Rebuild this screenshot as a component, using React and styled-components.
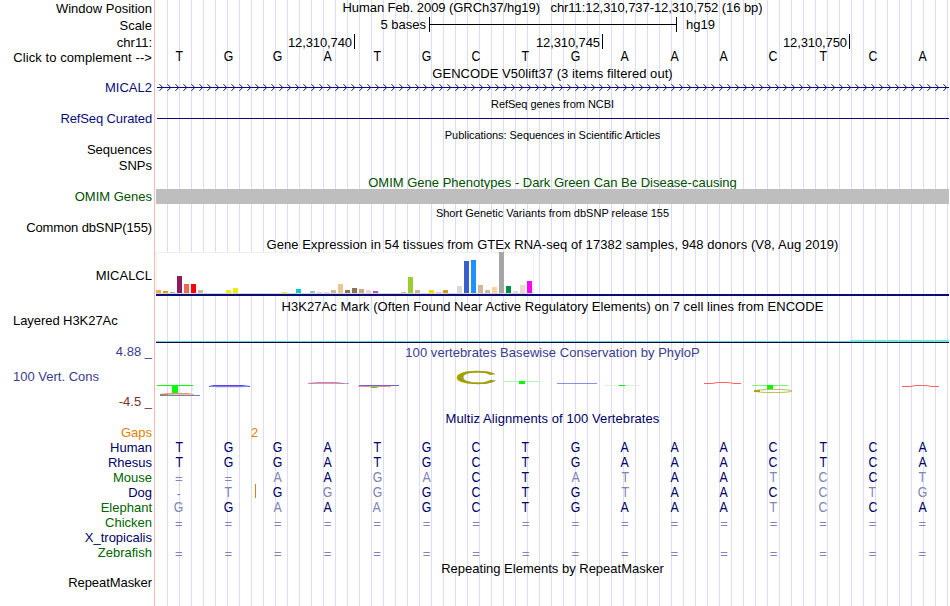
import React from "react";
import styled, { createGlobalStyle } from "styled-components";

const NAVY = "#0c0c78";
const ALIGN = "#000064";
const MISMATCH = "#8282b4";
const GREEN = "#006400";
const ORANGE = "#e08200";

const REFERENCE = "TGGATGCTGAAACTCA";

const species = [
  { name: "Human", color: ALIGN, seq: "TGGATGCTGAAACTCA" },
  { name: "Rhesus", color: ALIGN, seq: "TGGATGCTGAAACTCA" },
  { name: "Mouse", color: GREEN, seq: "==AAGACTATAATCCT" },
  { name: "Dog", color: ALIGN, seq: "-TGGGGCTGTAACCTG", insertAfter: 1 },
  { name: "Elephant", color: GREEN, seq: "GGAAAGCTGAAATCCA" },
  { name: "Chicken", color: GREEN, seq: "================" },
  { name: "X_tropicalis", color: ALIGN, seq: "" },
  { name: "Zebrafish", color: GREEN, seq: "================" },
];

// [tissue index, bar height, color]
const tissues = [
  [0, 3, "#ffa54f"],
  [1, 2, "#ee9a00"],
  [2, 1, "#8fbc8f"],
  [3, 17, "#8b1c62"],
  [4, 9, "#ee6a50"],
  [5, 9, "#ff0000"],
  [6, 3, "#cdb79e"],
  [10, 3, "#eeee00"],
  [11, 5, "#eeee00"],
  [18, 1, "#eeee00"],
  [20, 4, "#00cdcd"],
  [22, 2, "#9ac0cd"],
  [23, 1, "#eed5d2"],
  [24, 1, "#eed5d2"],
  [25, 3, "#cdb79e"],
  [26, 9, "#eec591"],
  [27, 3, "#8b7355"],
  [28, 5, "#8b7355"],
  [29, 4, "#cdaa7d"],
  [30, 3, "#eed5d2"],
  [31, 2, "#b452cd"],
  [35, 1, "#cdb79e"],
  [36, 16, "#9acd32"],
  [37, 3, "#cdb79e"],
  [39, 3, "#ffd700"],
  [40, 1, "#ffb6c1"],
  [41, 3, "#cd9b1d"],
  [43, 7, "#d9d9d9"],
  [44, 32, "#3a5fcd"],
  [45, 33, "#1e90ff"],
  [46, 8, "#cdb79e"],
  [47, 3, "#cdb79e"],
  [48, 6, "#ffd39b"],
  [49, 41, "#a6a6a6"],
  [50, 7, "#008b45"],
  [51, 2, "#eed5d2"],
  [52, 8, "#eed5d2"],
  [53, 12, "#ff00ff"],
];

const Bases = ({ seq, color, insertAfter }) => (
  <BaseRow>
    {seq.split("").map((base, i) => {
      const shade = color || (base === REFERENCE[i] ? ALIGN : MISMATCH);
      return (
        <BaseCell key={i} $color={shade}>
          {base === "=" || base === "-" ? (
            <GapSign>{base}</GapSign>
          ) : (
            <Letter>{base}</Letter>
          )}
          {insertAfter === i && <Insert />}
        </BaseCell>
      );
    })}
  </BaseRow>
);

const TitleRow = ({ height, top, color, small, spacing, children }) => (
  <Row $height={height}>
    <Label />
    <Title $top={top} $color={color} $small={small} $spacing={spacing}>
      {children}
    </Title>
  </Row>
);

const GeneArrows = () => (
  <Drawing width="793" height="16">
    <rect x="1" y="7" width="792" height="1" fill={NAVY} />
    {Array.from({ length: 99 }, (_, i) => (
      <path
        key={i}
        d={`M${3.5 + i * 8} 4.2 l3.2 3.3 l-3.2 3.3`}
        fill="none"
        stroke={NAVY}
        strokeWidth="1"
      />
    ))}
  </Drawing>
);

const ExpressionChart = () => (
  <Drawing width="793" height="44" shapeRendering="crispEdges">
    <rect width="378" height="42" fill="#f0f0f0" />
    <rect x="1" y="1" width="376" height="40" fill="#fff" />
    <rect y="41" width="378" height="1" fill="#d6d6d6" />
    {tissues.map(([i, h, color]) => (
      <rect key={i} x={i * 7} y={41 - h} width="5" height={h} fill={color} />
    ))}
    <rect y="42" width="793" height="2" fill={NAVY} />
  </Drawing>
);

const AcetylSignal = () => (
  <Drawing width="793" height="31" shapeRendering="crispEdges">
    <rect y="29" width="793" height="1" fill="#70cbc8" />
    <rect x="694" y="28" width="99" height="2" fill="#70e8d0" />
    <rect y="30" width="793" height="1" fill="#0a0a55" />
  </Drawing>
);

const ConservationLogo = () => (
  <Drawing width="793" height="52">
    <g shapeRendering="crispEdges">
      <rect x="1" y="27" width="36" height="1" fill="#00ff00" />
      <rect x="16" y="28" width="6" height="7" fill="#00ff00" />
      <rect x="348" y="23" width="36" height="1" fill="#b4f8b4" />
      <rect x="363" y="23" width="6" height="3" fill="#00ff00" />
      <rect x="448" y="27" width="36" height="1" fill="#dcf5dc" />
      <rect x="463" y="27" width="6" height="1" fill="#00ee00" />
      <rect x="596" y="27" width="36" height="1" fill="#78f878" />
      <rect x="611" y="27" width="6" height="4" fill="#00ff00" />
      <rect x="215" y="29" width="6" height="1" fill="#00ff00" />
    </g>
    <path d="M5 36.5 L12 35.5 H32 L38 36.5" fill="none" stroke="#ff8c78" />
    <path d="M4 36.5 H12" stroke="#a8a020" strokeWidth="1.4" />
    <path d="M12 36.5 H37" stroke="#d8d080" />
    <path d="M4 37.5 H44" stroke="#7878d8" />
    <path d="M53 28.5 L58 27.5 H86 L94 28.5" fill="none" stroke="#4646ff" />
    <path d="M54 28.5 H92" stroke="#8282ff" />
    <path d="M60 29.5 H86" stroke="#ffb4b4" strokeWidth="0.6" />
    <path d="M152 25.5 L162 24.5 H180 L188 25.5" fill="none" stroke="#ff7878" />
    <path d="M154 25.5 H193" stroke="#8080d8" strokeWidth="0.7" />
    <path d="M203 27.5 H243" stroke="#6464d8" />
    <path
      d="M202 28.3 L210 28.5 H228 L235 28.3"
      fill="none"
      stroke="#ff7878"
      strokeWidth="0.9"
    />
    <text
      transform="translate(298.2 26.4) scale(3.4 1)"
      fontSize="17.6"
      fill="#a0a000"
      stroke="#a0a000"
      strokeWidth="0.25"
    >
      C
    </text>
    <path d="M401 25.5 H441" stroke="#6e6ee0" strokeWidth="0.8" />
    <path
      d="M548 25.5 H556 L562 24.5 H572 L578 25.5 H585"
      fill="none"
      stroke="#ff5050"
      strokeWidth="0.9"
    />
    <ellipse
      cx="617.5"
      cy="33"
      rx="18.5"
      ry="1.6"
      fill="none"
      stroke="#b4b43c"
      strokeWidth="0.9"
    />
    <path d="M598 33 H604" stroke="#a0a000" strokeWidth="1.8" />
    <path
      d="M746 28.5 H754 L760 27.5 H770 L776 28.5 H783"
      fill="none"
      stroke="#ff5050"
      strokeWidth="0.9"
    />
  </Drawing>
);

const App = () => {
  return (
    <>
      <GlobalStyle />
      <Browser>
        <Row $height={17}>
          <Label $top={1}>Window Position</Label>
          <Title $spacing={-0.07}>
            {"Human Feb. 2009 (GRCh37/hg19)   chr11:12,310,737-12,310,752 (16 bp)"}
          </Title>
        </Row>
        <Row $height={17}>
          <Label $top={1}>Scale</Label>
          <Track>
            <ScaleText>5 bases</ScaleText>
            <ScaleBar />
            <span>hg19</span>
          </Track>
        </Row>
        <Row $height={15}>
          <Label $top={1}>chr11:</Label>
          <Track>
            <Position $width={199}>12,310,740</Position>
            <Position $width={248}>12,310,745</Position>
            <Position $width={247}>12,310,750</Position>
          </Track>
        </Row>
        <Row $height={15}>
          <Label $top={1} $spacing={0.08}>
            Click to complement --&gt;
          </Label>
          <Bases seq={REFERENCE} color="#000" />
        </Row>
        <TitleRow height={16} top={2}>
          GENCODE V50lift37 (3 items filtered out)
        </TitleRow>
        <Row $height={16}>
          <Label $color={NAVY}>MICAL2</Label>
          <GeneArrows />
        </Row>
        <TitleRow height={15} top={1} small>
          RefSeq genes from NCBI
        </TitleRow>
        <Row $height={16}>
          <Label $color={NAVY} $spacing={-0.12}>
            RefSeq Curated
          </Label>
          <GeneLine />
        </Row>
        <TitleRow height={15} top={1} small>
          Publications: Sequences in Scientific Articles
        </TitleRow>
        <Row $height={16}>
          <Label>Sequences</Label>
        </Row>
        <Row $height={16}>
          <Label>SNPs</Label>
        </Row>
        <TitleRow height={15} top={1} color="#005000" spacing={0}>
          OMIM Gene Phenotypes - Dark Green Can Be Disease-causing
        </TitleRow>
        <Row $height={15}>
          <Label $color="#005000">OMIM Genes</Label>
          <OmimBar />
        </Row>
        <TitleRow height={16} top={2} small spacing={0}>
          Short Genetic Variants from dbSNP release 155
        </TitleRow>
        <Row $height={16}>
          <Label $spacing={-0.12}>Common dbSNP(155)</Label>
        </Row>
        <TitleRow height={16} top={1}>
          Gene Expression in 54 tissues from GTEx RNA-seq of 17382 samples, 948
          donors (V8, Aug 2019)
        </TitleRow>
        <Row $height={44}>
          <Label $top={16}>MICALCL</Label>
          <ExpressionChart />
        </Row>
        <TitleRow height={16} top={3}>
          H3K27Ac Mark (Often Found Near Active Regulatory Elements) on 7 cell
          lines from ENCODE
        </TitleRow>
        <Row $height={31}>
          <Label $top={1} $left $spacing={-0.06}>
            Layered H3K27Ac
          </Label>
          <AcetylSignal />
        </Row>
        <Row $height={15}>
          <Label $top={1} $color="#3c3c8c">
            4.88 _
          </Label>
          <Title $top={2} $color="#3c3c8c">
            100 vertebrates Basewise Conservation by PhyloP
          </Title>
        </Row>
        <Row $height={52}>
          <ConsLabels>
            <Label $top={11} $left $color="#3c3c8c">
              100 Vert. Cons
            </Label>
            <Label $top={10} $color="#783232">
              -4.5 _
            </Label>
          </ConsLabels>
          <ConservationLogo />
        </Row>
        <TitleRow height={15} top={1} color={ALIGN} spacing={0.08}>
          Multiz Alignments of 100 Vertebrates
        </TitleRow>
        <Row $height={15}>
          <Label $color={ORANGE}>Gaps</Label>
          <GapCount>2</GapCount>
        </Row>
        {species.map((s) => (
          <Row key={s.name} $height={15}>
            <Label $color={s.color}>{s.name}</Label>
            <Bases seq={s.seq} insertAfter={s.insertAfter} />
          </Row>
        ))}
        <TitleRow height={15} top={1} spacing={0}>
          Repeating Elements by RepeatMasker
        </TitleRow>
        <Row $height={31}>
          <Label $spacing={-0.06}>RepeatMasker</Label>
        </Row>
      </Browser>
    </>
  );
};

export default App;

const GlobalStyle = createGlobalStyle`
  * {
    box-sizing: border-box;
  }
  body {
    margin: 0;
    background: #fff;
    overflow: hidden;
  }
`;

const Browser = styled.div`
  width: 949px;
  height: 606px;
  font-family: "Liberation Sans", Arial, sans-serif;
  font-size: 13px;
  line-height: 15px;
  color: #000;
  background:
    linear-gradient(#ffb4b4, #ffb4b4) 154px 0 / 1px 100% no-repeat,
    linear-gradient(#fff, #fff) 0 0 / 156px 100% no-repeat,
    repeating-linear-gradient(
      to right,
      #dcdcf8 0 1px,
      transparent 1px 12px
    ) 11px 0;
`;

const Row = styled.div`
  display: grid;
  grid-template-columns: 156px 793px;
  height: ${(p) => p.$height}px;
`;

const Label = styled.div`
  padding: ${(p) => p.$top || 0}px 4px 0 13px;
  text-align: ${(p) => (p.$left ? "left" : "right")};
  color: ${(p) => p.$color || "#000"};
  letter-spacing: ${(p) => p.$spacing || 0}px;
  white-space: nowrap;
`;

const ConsLabels = styled.div`
  display: flex;
  flex-direction: column;
`;

const Title = styled.div`
  padding-top: ${(p) => p.$top || 0}px;
  text-align: center;
  white-space: pre;
  font-size: ${(p) => (p.$small ? 11 : 13)}px;
  letter-spacing: ${(p) => p.$spacing ?? (p.$small ? -0.05 : 0.05)}px;
  color: ${(p) => p.$color || "#000"};
`;

const Track = styled.div`
  display: flex;
`;

const ScaleText = styled.span`
  width: 270px;
  text-align: right;
`;

const ScaleBar = styled.div`
  width: 248px;
  height: 15px;
  margin: 0 9px 0 3px;
  border: solid #000;
  border-width: 0 1px;
  background: linear-gradient(#000, #000) 0 7px / 100% 1px no-repeat;
`;

const Position = styled.div`
  width: ${(p) => p.$width}px;
  height: 15px;
  padding: 1px 2px 0 0;
  border-right: 1px solid #000;
  text-align: right;
  letter-spacing: -0.1px;
`;

const BaseRow = styled.div`
  display: grid;
  grid-template-columns: repeat(16, 1fr);
  margin-left: -2px;
  margin-right: 2px;
`;

const BaseCell = styled.div`
  position: relative;
  display: flex;
  justify-content: center;
  height: 15px;
  color: ${(p) => p.$color};
`;

const Letter = styled.span`
  font-size: 14px;
  line-height: 14px;
  transform: scaleX(0.88);
`;

const GapSign = styled.span`
  padding-top: 1px;
`;

const Insert = styled.i`
  position: absolute;
  right: -3px;
  top: -1px;
  width: 1px;
  height: 14px;
  background: ${ORANGE};
`;

const GapCount = styled.div`
  padding-left: 95px;
  color: ${ORANGE};
`;

const GeneLine = styled.div`
  height: 1px;
  margin: 7px 0 0 1px;
  background: ${NAVY};
`;

const OmimBar = styled.div`
  background: #bebebe;
`;

const Drawing = styled.svg`
  display: block;
`;
